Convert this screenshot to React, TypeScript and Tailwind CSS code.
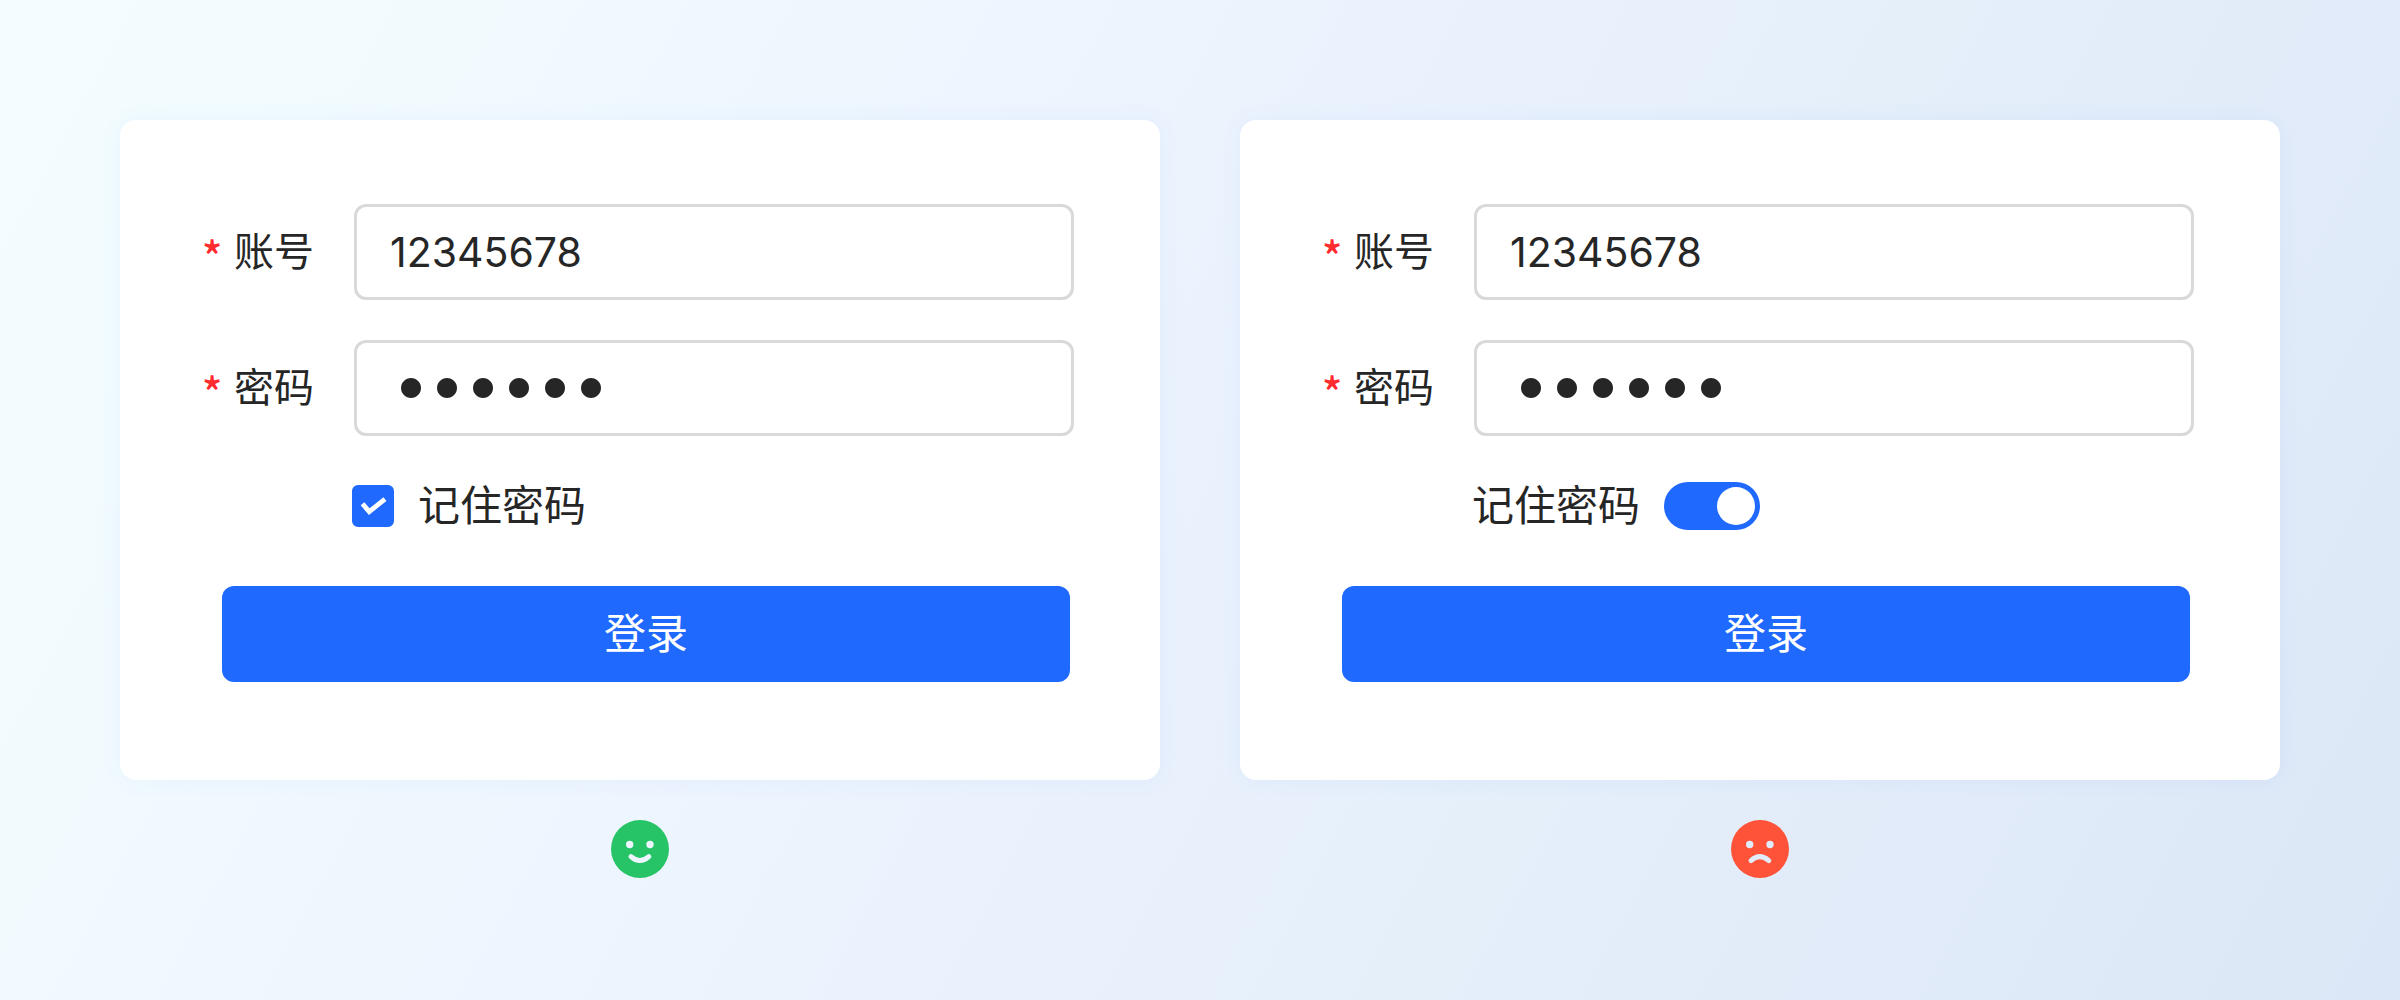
import { FC, ReactNode, useId, useState } from "react";

interface IFieldProps {
  label: string;
  type: string;
  value: string;
  inputClass: string;
}

const Field: FC<IFieldProps> = ({ label, type, value, inputClass }) => {
  const id = useId();
  const [text, setText] = useState(value);

  return (
    <div className="flex items-center">
      <span className="w-8 shrink-0 pt-1.5 text-[42px] leading-[48px] font-medium text-[#ff2b2f]">
        *
      </span>
      <label htmlFor={id} className="w-[120px] shrink-0 pb-1.5 text-[40px] leading-[48px]">
        {label}
      </label>
      <input
        id={id}
        type={type}
        value={text}
        onChange={(e) => setText(e.target.value)}
        className={`h-24 min-w-0 flex-1 rounded-xl border-3 border-[#d9d9d9] bg-white font-['Inter','Noto_Sans_CJK_SC',sans-serif] outline-none focus:border-[#1f69ff] ${inputClass}`}
      />
    </div>
  );
};

const RememberCheckbox: FC = () => (
  <label className="flex h-12 items-center gap-6 text-[42px] leading-[48px]">
    <span className="grid size-[42px] place-items-center">
      <input
        type="checkbox"
        defaultChecked
        className="peer col-start-1 row-start-1 size-[42px] appearance-none rounded-md border-3 border-[#d9d9d9] checked:border-[#1f69ff] checked:bg-[#1f69ff]"
      />
      <svg
        viewBox="0 0 42 42"
        className="pointer-events-none col-start-1 row-start-1 hidden size-[42px] peer-checked:block"
      >
        <path d="M10.5 18.8 17.2 26.6 33 14.2" fill="none" stroke="#fff" strokeWidth="4.8" />
      </svg>
    </span>
    <span className="pb-1.5">记住密码</span>
  </label>
);

const RememberSwitch: FC = () => (
  <label className="flex h-12 items-center gap-6 text-[42px] leading-[48px]">
    <span className="pb-1.5">记住密码</span>
    <input
      type="checkbox"
      role="switch"
      defaultChecked
      className="flex h-12 w-24 appearance-none items-center rounded-full bg-[#bfbfbf] px-[5px] before:size-[38px] before:rounded-full before:bg-white checked:justify-end checked:bg-[#1f69ff]"
    />
  </label>
);

const LoginForm: FC<{ children: ReactNode }> = ({ children }) => (
  <form
    onSubmit={(e) => e.preventDefault()}
    className="w-full rounded-2xl bg-white pt-[84px] pr-[86px] pb-[98px] pl-[82px] shadow-[0_0_24px_rgba(31,105,255,0.05)]"
  >
    <div className="flex flex-col gap-10">
      <Field label="账号" type="text" value="12345678" inputClass="px-[33px] text-[41px]" />
      <Field label="密码" type="password" value="123456" inputClass="px-9 pb-2 text-[64px]" />
    </div>
    <div className="mt-[46px] ml-[150px] flex">{children}</div>
    <div className="mt-14 mr-1 ml-5">
      <button
        type="submit"
        className="h-24 w-full rounded-xl bg-[#1f69ff] pb-1.5 text-[42px] leading-[48px] text-white"
      >
        登录
      </button>
    </div>
  </form>
);

const HappyFace: FC = () => (
  <svg viewBox="0 0 58 58" className="size-[58px]" role="img" aria-label="推荐">
    <circle cx="29" cy="29" r="29" fill="#26c467" />
    <circle cx="18.7" cy="24.5" r="3.7" fill="#edf5fe" />
    <circle cx="39" cy="24.5" r="3.7" fill="#edf5fe" />
    <path
      d="M20 36.6Q28.8 44.4 37.8 36.6"
      fill="none"
      stroke="#edf5fe"
      strokeWidth="5"
      strokeLinecap="round"
    />
  </svg>
);

const SadFace: FC = () => (
  <svg viewBox="0 0 58 58" className="size-[58px]" role="img" aria-label="不推荐">
    <circle cx="29" cy="29" r="29" fill="#ff5339" />
    <circle cx="18.7" cy="24.5" r="3.7" fill="#e2ebf9" />
    <circle cx="39" cy="24.5" r="3.7" fill="#e2ebf9" />
    <path
      d="M20 40.6Q28.8 32.8 37.8 40.6"
      fill="none"
      stroke="#e2ebf9"
      strokeWidth="5"
      strokeLinecap="round"
    />
  </svg>
);

const App: FC = () => {
  return (
    <main className="min-h-screen bg-[linear-gradient(118deg,#f3fdff_0%,#f1fafe_18%,#edf5fe_36%,#e9f1fc_52%,#e5effa_66%,#e1ebf9_82%,#dbe7f6_100%)] px-[120px] pt-[120px] font-['Noto_Sans_CJK_SC',sans-serif] text-[#262626]">
      <div className="grid grid-cols-2 gap-20">
        <section className="flex min-w-0 flex-col items-center gap-10">
          <LoginForm>
            <RememberCheckbox />
          </LoginForm>
          <HappyFace />
        </section>
        <section className="flex min-w-0 flex-col items-center gap-10">
          <LoginForm>
            <RememberSwitch />
          </LoginForm>
          <SadFace />
        </section>
      </div>
    </main>
  );
};

export default App;
